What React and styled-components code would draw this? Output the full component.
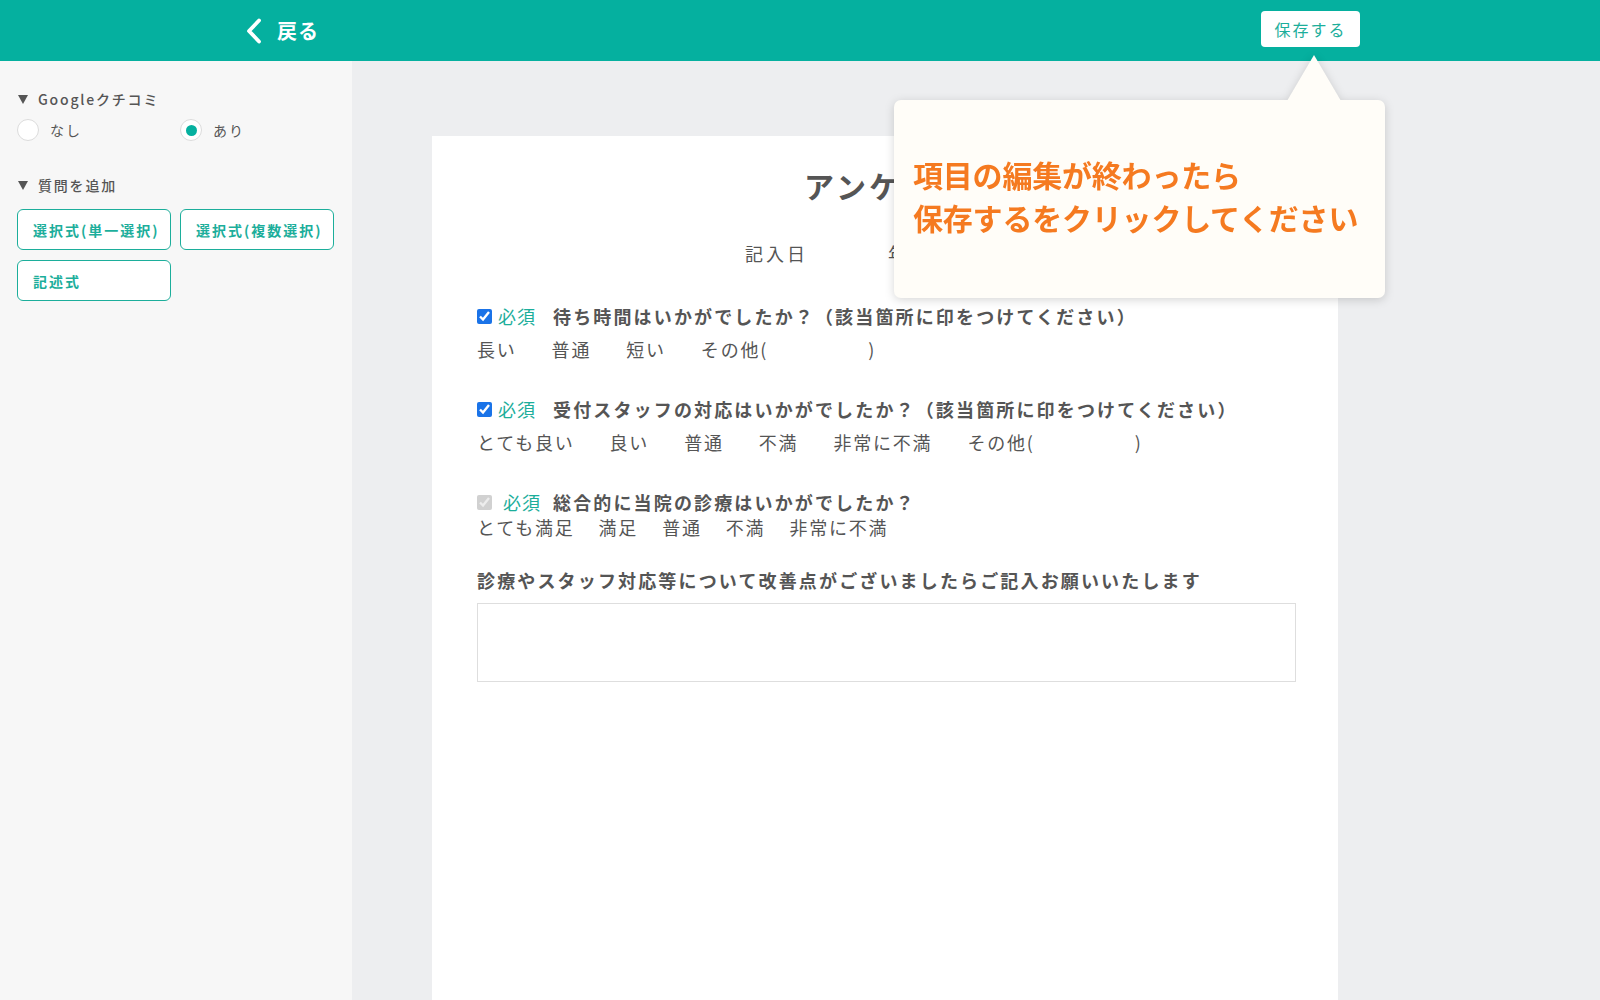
import React from 'react';
import styled, { createGlobalStyle } from 'styled-components';

const GlobalStyle = createGlobalStyle`
  html, body {
    margin: 0;
    padding: 0;
    height: 100%;
  }
  body {
    font-family: "Noto Sans CJK JP", "Noto Sans", sans-serif;
    color: #555;
  }
  * {
    box-sizing: border-box;
  }
`;

const TEAL = '#05b09f';
const TEAL_TEXT = '#1cae9b';

const Page = styled.div`
  position: relative;
  display: flex;
  flex-direction: column;
  min-height: 100vh;
`;

const Header = styled.header`
  display: flex;
  align-items: center;
  justify-content: space-between;
  height: 61px;
  padding: 0 240px 0 245px;
  background: ${TEAL};
`;

const BackLink = styled.a`
  display: flex;
  align-items: center;
  gap: 14px;
  color: #fff;
  font-size: 20px;
  font-weight: 700;
  letter-spacing: 1px;
  cursor: pointer;
`;

const SaveButton = styled.button`
  width: 99px;
  height: 36px;
  margin-top: -4px;
  border: none;
  border-radius: 4px;
  background: #fff;
  color: ${TEAL_TEXT};
  font-family: inherit;
  font-size: 16px;
  letter-spacing: 2px;
  cursor: pointer;
`;

const Body = styled.div`
  display: flex;
  flex: 1;
`;

const Sidebar = styled.aside`
  width: 352px;
  flex-shrink: 0;
  padding: 28px 17px;
  background: #f7f7f7;
`;

const SectionTitle = styled.div`
  display: flex;
  align-items: center;
  gap: 10px;
  margin: ${p => p.$top || 0}px 0 0 1px;
  font-size: 14px;
  font-weight: 500;
  letter-spacing: 1.8px;
  color: #555;
  &::before {
    content: '';
    width: 0;
    height: 0;
    border-left: 5.5px solid transparent;
    border-right: 5.5px solid transparent;
    border-top: 9px solid #555;
  }
`;

const RadioRow = styled.div`
  display: grid;
  grid-template-columns: 163px 160px;
  margin-top: 10px;
`;

const RadioLabel = styled.label`
  display: flex;
  align-items: center;
  gap: 11px;
  font-size: 14px;
  letter-spacing: 2px;
  color: #555;
`;

const RadioDot = styled.span`
  position: relative;
  width: 22px;
  height: 22px;
  border-radius: 50%;
  border: 1px solid #dcdcdc;
  background: #fff;
  &::after {
    content: '';
    display: ${p => (p.$checked ? 'block' : 'none')};
    position: absolute;
    top: 4.5px;
    left: 4.5px;
    width: 11px;
    height: 11px;
    border-radius: 50%;
    background: ${TEAL};
  }
`;

const ButtonGrid = styled.div`
  display: grid;
  grid-template-columns: 154px 154px;
  gap: 10px 9px;
  margin-top: 14px;
`;

const AddButton = styled.button`
  height: 41px;
  padding: 0 0 0 15px;
  border: 1.5px solid ${TEAL_TEXT};
  border-radius: 6px;
  background: #fff;
  color: ${TEAL_TEXT};
  font-family: inherit;
  font-size: 14px;
  font-weight: 700;
  letter-spacing: 2px;
  text-align: left;
  cursor: pointer;
`;

const Main = styled.main`
  flex: 1;
  display: flex;
  padding: 75px 0 0 80px;
  background: #edeef0;
`;

const Sheet = styled.section`
  width: 906px;
  padding: 27px 43px 0 45px;
  background: #fff;
`;

const Title = styled.h1`
  margin: 0;
  font-size: 30px;
  font-weight: 700;
  line-height: 45px;
  letter-spacing: 3px;
  text-align: center;
  color: #555;
`;

const DateRow = styled.div`
  display: flex;
  gap: 80px;
  margin: 32px 0 0 268px;
  font-size: 18px;
  line-height: 1.5;
  letter-spacing: 3px;
  color: #555;
`;

const Question = styled.div`
  margin-top: ${p => p.$top}px;
`;

const QuestionHead = styled.div`
  display: flex;
  align-items: center;
  line-height: 27px;
`;

const Check = styled.input.attrs({ type: 'checkbox' })`
  width: 15px;
  height: 15px;
  margin: 0 ${p => (p.disabled ? 11 : 6)}px 0 0;
  accent-color: #1a73e8;
`;

const Required = styled.span`
  margin-right: ${p => p.$gap}px;
  font-size: 18px;
  letter-spacing: 1px;
  color: ${TEAL_TEXT};
`;

const QuestionText = styled.span`
  font-size: 18px;
  font-weight: 700;
  letter-spacing: 2.15px;
  color: #555;
`;

const Options = styled.div`
  display: flex;
  gap: ${p => p.$gap}px;
  margin-top: ${p => p.$top}px;
  font-size: 18px;
  line-height: 27px;
  letter-spacing: 1.8px;
  color: #555;
`;

const Other = styled.span`
  display: inline-flex;
`;

const Blank = styled.span`
  display: inline-block;
  width: 100px;
`;

const FieldLabel = styled.div`
  margin-top: 26px;
  font-size: 18px;
  font-weight: 700;
  line-height: 27px;
  letter-spacing: 2.15px;
  color: #555;
`;

const TextBox = styled.textarea`
  display: block;
  width: 819px;
  height: 79px;
  margin-top: 9px;
  border: 1.5px solid #dedede;
  resize: none;
  font-family: inherit;
  outline: none;
`;

const Tooltip = styled.div`
  position: absolute;
  top: 55px;
  left: 894px;
  width: 491px;
  filter: drop-shadow(0 2px 5px rgba(0, 0, 0, 0.16));
`;

const TooltipArrow = styled.div`
  width: 0;
  height: 0;
  margin-left: 393px;
  border-left: 27px solid transparent;
  border-right: 27px solid transparent;
  border-bottom: 46px solid #fffdf8;
`;

const TooltipBody = styled.div`
  height: 198px;
  margin-top: -1px;
  padding: 53px 0 0 19px;
  border-radius: 7px;
  background: #fffdf8;
  color: #f57a20;
  font-size: 30px;
  font-weight: 700;
  line-height: 43px;
  letter-spacing: -0.2px;
`;

const questions = [
  {
    text: '待ち時間はいかがでしたか？（該当箇所に印をつけてください）',
    options: ['長い', '普通', '短い'],
    other: true,
    top: 36,
    gap: 35,
    optTop: 6,
  },
  {
    text: '受付スタッフの対応はいかがでしたか？（該当箇所に印をつけてください）',
    options: ['とても良い', '良い', '普通', '不満', '非常に不満'],
    other: true,
    top: 33,
    gap: 35,
    optTop: 6,
  },
  {
    text: '総合的に当院の診療はいかがでしたか？',
    options: ['とても満足', '満足', '普通', '不満', '非常に不満'],
    disabled: true,
    top: 33,
    gap: 24,
    optTop: -2,
  },
];

function ChevronLeft() {
  return (
    <svg width="18" height="26" viewBox="0 0 18 26" fill="none">
      <path d="M14 2.5 L4 13 L14 23.5" stroke="#fff" strokeWidth="3.8" strokeLinecap="round" strokeLinejoin="round" />
    </svg>
  );
}

export default function App() {
  return (
    <Page>
      <GlobalStyle />
      <Header>
        <BackLink>
          <ChevronLeft />
          戻る
        </BackLink>
        <SaveButton>保存する</SaveButton>
      </Header>

      <Body>
        <Sidebar>
          <SectionTitle>Googleクチコミ</SectionTitle>
          <RadioRow>
            <RadioLabel>
              <RadioDot />
              なし
            </RadioLabel>
            <RadioLabel>
              <RadioDot $checked />
              あり
            </RadioLabel>
          </RadioRow>

          <SectionTitle $top={34}>質問を追加</SectionTitle>
          <ButtonGrid>
            <AddButton>選択式(単一選択)</AddButton>
            <AddButton>選択式(複数選択)</AddButton>
            <AddButton>記述式</AddButton>
          </ButtonGrid>
        </Sidebar>

        <Main>
          <Sheet>
            <Title>アンケート</Title>
            <DateRow>
              <span>記入日</span>
              <span>年　　月　　日</span>
            </DateRow>

            {questions.map(q => (
              <Question key={q.text} $top={q.top}>
                <QuestionHead>
                  <Check defaultChecked disabled={q.disabled} />
                  <Required $gap={q.disabled ? 12 : 17}>必須</Required>
                  <QuestionText>{q.text}</QuestionText>
                </QuestionHead>
                <Options $gap={q.gap} $top={q.optTop}>
                  {q.options.map(o => (
                    <span key={o}>{o}</span>
                  ))}
                  {q.other && (
                    <Other>
                      その他(<Blank />)
                    </Other>
                  )}
                </Options>
              </Question>
            ))}

            <FieldLabel>診療やスタッフ対応等について改善点がございましたらご記入お願いいたします</FieldLabel>
            <TextBox />
          </Sheet>
        </Main>
      </Body>

      <Tooltip>
        <TooltipArrow />
        <TooltipBody>
          項目の編集が終わったら
          <br />
          保存するをクリックしてください
        </TooltipBody>
      </Tooltip>
    </Page>
  );
}
